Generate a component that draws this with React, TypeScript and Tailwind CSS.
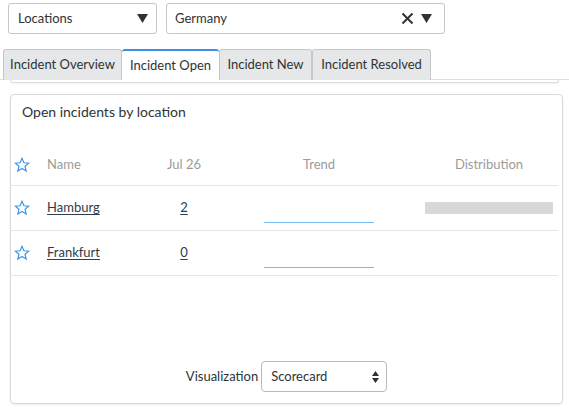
import { useState } from 'react';

type Row = { name: string; count: number; dist: number };

const rows: Row[] = [
  { name: 'Hamburg', count: 2, dist: 128 },
  { name: 'Frankfurt', count: 0, dist: 0 },
];

const tabs = [
  { id: 'overview', label: 'Incident Overview', w: 'w-[119px]' },
  { id: 'open', label: 'Incident Open', w: 'w-[97px]' },
  { id: 'new', label: 'Incident New', w: 'w-[93px]' },
  { id: 'resolved', label: 'Incident Resolved', w: 'w-[119px]' },
];

function Caret() {
  return (
    <svg width="11" height="9" viewBox="0 0 11 9">
      <path d="M0 0 H11 L5.5 9 Z" fill="#2e3436" />
    </svg>
  );
}

function ClearIcon() {
  return (
    <svg width="13" height="13" viewBox="0 0 13 13">
      <path d="M1.5 1.5 L11.5 11.5 M11.5 1.5 L1.5 11.5" stroke="#2e3436" strokeWidth="2" />
    </svg>
  );
}

function StarIcon() {
  return (
    <svg width="16" height="16" viewBox="0 0 24 24">
      <polygon
        points="12,2 14.9,8.6 22,9.3 16.6,14 18.2,21 12,17.3 5.8,21 7.4,14 2,9.3 9.1,8.6"
        fill="none"
        stroke="#3d95e8"
        strokeWidth="1.8"
        strokeLinejoin="miter"
      />
    </svg>
  );
}

function SortArrows() {
  return (
    <svg width="7" height="12" viewBox="0 0 7 12">
      <path d="M0 5 L3.5 0 L7 5 Z M0 7 L3.5 12 L7 7 Z" fill="#2e3436" />
    </svg>
  );
}

export default function App() {
  const [activeTab, setActiveTab] = useState('open');

  return (
    <div className="w-[569px] h-[409px] bg-white font-['Lato',sans-serif] text-[#2e3436] overflow-hidden">
      {/* Filters */}
      <div className="flex gap-[9px] pl-[8px] pt-[3px]">
        <div className="w-[149px] h-[31px] border border-[#c7c7c7] rounded-[3px] flex items-center justify-between pl-[9px] pr-[8px] text-[13px]">
          <span>Locations</span>
          <Caret />
        </div>
        <div className="w-[279px] h-[31px] border border-[#c7c7c7] rounded-[3px] flex items-center justify-between pl-[8px] pr-[12px] text-[13px]">
          <span>Germany</span>
          <div className="flex items-center gap-[7px]">
            <ClearIcon />
            <Caret />
          </div>
        </div>
      </div>

      {/* Tabs */}
      <div className="mt-[15px] flex pl-[3px] h-[31px] border-b border-[#e0e0e0]">
        {tabs.map((t) => (
          <button
            key={t.id}
            onClick={() => setActiveTab(t.id)}
            className={`${t.w} h-[31px] text-[13px] flex items-center justify-center rounded-t-[3px] ${
              activeTab === t.id
                ? 'bg-white border-t-2 border-t-[#3b8fe4] text-[#2e3436]'
                : 'bg-[#e6e7e9] border border-[#c6c7c9] border-b-0 text-[#2e3436]'
            }`}
          >
            {t.label}
          </button>
        ))}
      </div>
      <div className="mx-[10px] h-[3px] border border-t-0 border-[#dedede] rounded-b-[5px] shadow-[0_1px_1px_rgba(0,0,0,0.05)]" />

      {/* Card */}
      <div className="mt-[11px] mx-[10px] w-[553px] h-[310px] border border-[#d9d9d9] rounded-[4px] shadow-[0_1px_2px_rgba(0,0,0,0.08)] flex flex-col">
        <div className="pl-[11px] pt-[7px] text-[14px] leading-[20px]">Open incidents by location</div>

        <div className="mt-[22px] grid grid-cols-[36px_103px_68px_202px_138px] text-[13px]">
          {/* header */}
          <div className="h-[42px] flex items-center pl-[3px] border-b border-[#e6e6e6]">
            <StarIcon />
          </div>
          <div className="h-[42px] flex items-center border-b border-[#e6e6e6] text-[#9b9b9b]">Name</div>
          <div className="h-[42px] flex items-center justify-center border-b border-[#e6e6e6] text-[#9b9b9b]">Jul 26</div>
          <div className="h-[42px] flex items-center justify-center border-b border-[#e6e6e6] text-[#9b9b9b]">Trend</div>
          <div className="h-[42px] flex items-center justify-center border-b border-[#e6e6e6] text-[#9b9b9b]">Distribution</div>

          {rows.map((r) => (
            <div key={r.name} className="contents">
              <div className="h-[45px] flex items-center pl-[3px] border-b border-[#e6e6e6]">
                <StarIcon />
              </div>
              <div className="h-[45px] flex items-center border-b border-[#e6e6e6]">
                <a className="underline underline-offset-2 text-[#2e3d49]">{r.name}</a>
              </div>
              <div className="h-[45px] flex items-center justify-center border-b border-[#e6e6e6]">
                <a className="underline underline-offset-2 text-[#2e3d49]">{r.count}</a>
              </div>
              <div className="h-[45px] flex items-end justify-center pb-[7px] border-b border-[#e6e6e6]">
                <div className="w-[110px] h-[1px] bg-[#74b9f0]" />
              </div>
              <div className="h-[45px] flex items-center justify-center border-b border-[#e6e6e6]">
                {r.dist > 0 && <div className="h-[12px] bg-[#d8d8d8]" style={{ width: r.dist }} />}
              </div>
            </div>
          ))}
        </div>

        {/* Footer */}
        <div className="mt-auto mb-[11px] flex items-center justify-center gap-[3px] text-[13px]">
          <span>Visualization</span>
          <div className="w-[126px] h-[31px] border border-[#b9b9b9] rounded-[4px] flex items-center justify-between pl-[9px] pr-[7px]">
            <span>Scorecard</span>
            <SortArrows />
          </div>
        </div>
      </div>
    </div>
  );
}
